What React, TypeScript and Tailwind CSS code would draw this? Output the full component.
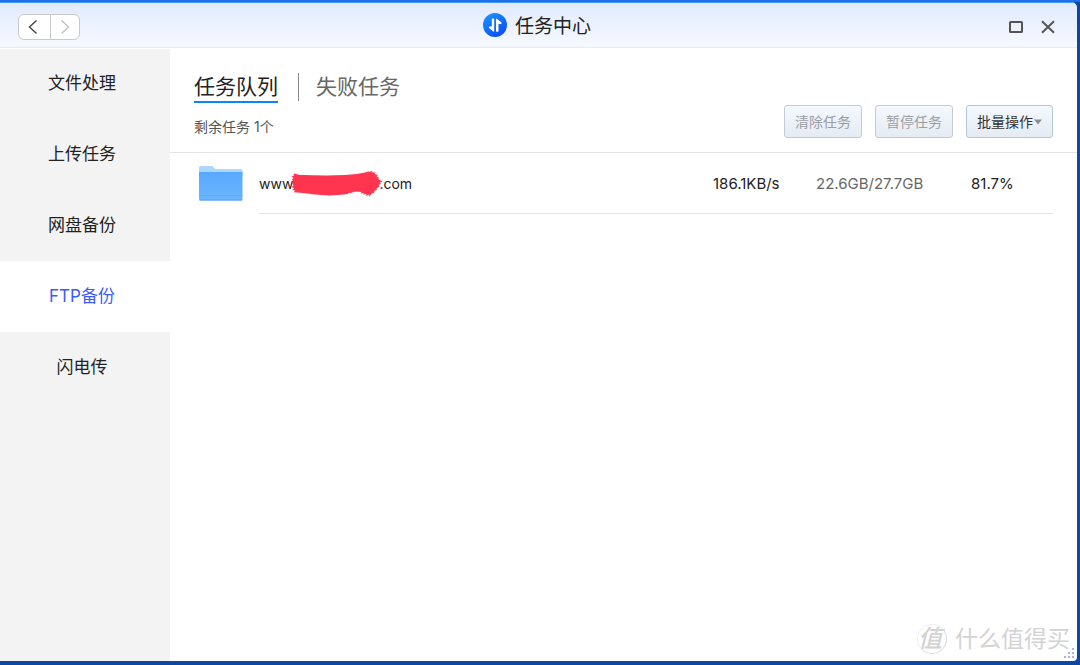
import React from "react";

type Task = {
  prefix: string;
  suffix: string;
  speed: string;
  size: string;
  percent: string;
};

const menu = ["文件处理", "上传任务", "网盘备份", "FTP备份", "闪电传"];
const activeMenu = "FTP备份";

const tasks: Task[] = [
  { prefix: "www", suffix: ".com", speed: "186.1KB/s", size: "22.6GB/27.7GB", percent: "81.7%" },
];

function Chevron({ dir }: { dir: "left" | "right" }) {
  return (
    <svg viewBox="0 0 10 16" className="h-4 w-2.5" fill="none" stroke="currentColor" strokeWidth="1.5" aria-hidden="true">
      <path d={dir === "left" ? "M8.5 1.5 1.5 8l7 6.5" : "M1.5 1.5 8.5 8l-7 6.5"} />
    </svg>
  );
}

function AppLogo() {
  return (
    <svg viewBox="0 0 24 24" className="size-6" aria-hidden="true">
      <defs>
        <linearGradient id="logo" x1="0" y1="0" x2="0.6" y2="1">
          <stop offset="0" stopColor="#1d97ff" />
          <stop offset="1" stopColor="#0a52f5" />
        </linearGradient>
      </defs>
      <circle cx="12" cy="12" r="12" fill="url(#logo)" />
      <path
        d="M8.8 6.3q0-.8.8-.8h.8q.8 0 .8.8v12q0 .5-.6.4L6.300 15.300q-.5-.5-.5-1 0-.9.8-.9h2.200zM13 6.200q0-.8.7-.5L18 9q.7.600.6 1.200 0 .8-.8.800h-2.300v6.900q0 .8-.8.800h-.9q-.8 0-.8-.8z"
        fill="#fff"
      />
    </svg>
  );
}

function Folder() {
  return (
    <svg viewBox="0 0 44 35" className="h-[35px] w-11" aria-hidden="true">
      <defs>
        <linearGradient id="folder" x1="0" y1="0" x2="0" y2="1">
          <stop offset="0" stopColor="#57a8fe" />
          <stop offset="1" stopColor="#6db6ff" />
        </linearGradient>
      </defs>
      <path d="M0 1.500Q0 0 1.500 0H12q1.200 0 2 .8l1.700 1.600q.8.700 2 .7H42q1.500 0 1.500 1.500V10H0z" fill="#abd6ff" />
      <path d="M0 6h43.500v27q0 1.500-1.500 1.500H1.500Q0 34.500 0 33z" fill="url(#folder)" />
      <path d="M0 29.500h43.500" stroke="#5fabf8" strokeWidth="0.700" />
      <path d="M.5 34h42.500" stroke="#57a0ec" strokeWidth="1" />
    </svg>
  );
}

function Scribble() {
  return (
    <svg viewBox="0 0 92 28" className="absolute -top-1 -left-0.5 h-7 w-[92px]" aria-hidden="true">
      <path
        d="M2.500 3.500 8 4.200 4.500 4.700 22 5.200 36 5.500 54 5 66 4 74 2.500 78 1.200 77.500 2.200 81.500.5 80.500 2.200 84.500 2.500 83.500 4 87 5 85.500 6.500 88.500 8 87 9 91.500 11.500 88.500 12.500 90 13.500 87.500 15.500 88.500 16.500 85.500 18.500 86 20 83.500 20.800 83 23 81 23.200 78 27 78.500 24.500 75 26 75.500 24 72 24.500 73 23 69.500 23.500 70.500 22 66 21.500 61 22 62 22.800 57 23 57.500 24 50 24.800 38 25.500 24 24.500 12 23 3 22.200 4 20.500 1 20 3 18.500.8 17 2.500 15.500 1 13 2 11 .8 9.500 2.500 8 .5 6.500 3 5.500z"
        fill="#ff344e"
      />
    </svg>
  );
}

const toolButton =
  "flex h-[33px] items-center rounded-[3px] border px-2.5 text-sm bg-linear-to-b from-[#f4f9fe] to-[#e5ebf4]";

export default function App() {
  return (
    <div className="flex min-h-screen flex-col border-t-2 border-t-[#1d6fe6] bg-[#0c47a1] pr-[3px] pb-1 font-['Inter','Noto_Sans_CJK_SC',sans-serif] text-[#222]">
      <div className="relative flex flex-1 flex-col overflow-hidden rounded-tr-[6px] rounded-br-[4px] bg-white">
        <header className="grid h-[46px] grid-cols-[1fr_auto_1fr] items-center border-t border-b border-t-[#4595ff] border-b-[#e9ebee] bg-linear-to-b from-[#e1eafd] to-[#f6f9ff] pr-[21px] pl-[18px]">
          <div className="mt-1 flex h-[26px] w-[62px] overflow-hidden rounded-[6px] border border-[#c9c9cb] bg-white">
            <button aria-label="后退" className="flex flex-1 items-center justify-center border-r border-[#c9c9cb] pr-0.5 text-[#4a4a4a]">
              <Chevron dir="left" />
            </button>
            <button aria-label="前进" className="flex flex-1 items-center justify-center text-[#c4c4c4]">
              <Chevron dir="right" />
            </button>
          </div>
          <h1 className="flex items-center gap-2 text-[19px] leading-6 text-[#222]">
            <AppLogo />
            <span className="pt-1">任务中心</span>
          </h1>
          <div className="mt-1 flex items-center justify-end gap-4 text-[#555]">
            <button aria-label="最大化">
              <svg viewBox="0 0 16 16" className="size-4" fill="none" stroke="currentColor" strokeWidth="2" aria-hidden="true">
                <rect x="2" y="3" width="12" height="10" rx="0.5" />
              </svg>
            </button>
            <button aria-label="关闭">
              <svg viewBox="0 0 16 16" className="size-4" fill="none" stroke="currentColor" strokeWidth="2" aria-hidden="true">
                <path d="M2 2.300 14 13.700M14 2.300 2 13.700" />
              </svg>
            </button>
          </div>
        </header>

        <div className="flex flex-1">
          <nav className="w-[170px] shrink-0 bg-[#f3f3f3] shadow-[inset_0_1px_0_#fff]">
            {menu.map((item) => (
              <a
                key={item}
                href="#"
                aria-current={item === activeMenu ? "page" : undefined}
                className={
                  "flex h-[71px] items-center justify-center pr-1.5 text-[17px] " +
                  (item === activeMenu ? "bg-white text-[#3b5bfd]" : "text-[#222]")
                }
              >
                {item}
              </a>
            ))}
          </nav>

          <main className="min-w-0 flex-1">
            <div className="flex h-[105px] items-end justify-between border-b border-[#e2e3e4] pr-6 pl-6">
              <div className="pb-[13px]">
                <div className="flex items-start text-[21px] leading-7">
                  <button className="border-b-2 border-[#0a84ff] text-[#222]">任务队列</button>
                  <span className="ml-5 h-7 w-px bg-[#8a8a8a]" />
                  <button className="ml-[17px] border-b-2 border-transparent text-[#666]">失败任务</button>
                </div>
                <p className="mt-3 text-sm leading-6 text-[#555]">剩余任务 1个</p>
              </div>
              <div className="flex gap-[13px] pb-3.5">
                <button className={toolButton + " border-[#c3cbd3] text-[#9b9ea2]"}>清除任务</button>
                <button className={toolButton + " border-[#c3cbd3] text-[#9b9ea2]"}>暂停任务</button>
                <button className={toolButton + " gap-px border-[#b4c6d9] text-[#333]"}>
                  批量操作
                  <svg viewBox="0 0 8 6" className="h-1.5 w-2" fill="#8b8f94" aria-hidden="true">
                    <path d="M0 .5h8L4 5.500z" />
                  </svg>
                </button>
              </div>
            </div>

            <ul className="pr-6 pl-[29px]">
              {tasks.map((task) => (
                <li key={task.prefix} className="flex h-[61px] text-sm">
                  <div className="flex w-[60px] shrink-0 items-center">
                    <Folder />
                  </div>
                  <div className="flex flex-1 items-center border-b border-[#e2e3e4] pt-0.5">
                    <div className="flex flex-1 items-center">
                      {task.prefix}
                      <span className="relative h-5 w-[86px]">
                        <Scribble />
                      </span>
                      {task.suffix}
                    </div>
                    <span className="w-[103px] text-[15px]">{task.speed}</span>
                    <span className="w-[155px] text-[15px] text-[#666]">{task.size}</span>
                    <span className="w-[82px] text-[15px]">{task.percent}</span>
                  </div>
                </li>
              ))}
            </ul>
          </main>
        </div>

        <div className="absolute right-[7px] bottom-1.5 flex items-center gap-2 text-[#d3d3d3]">
          <span className="flex size-[30px] items-center justify-center rounded-full border border-[#dcdcdc] border-t-[#f0f0f0] border-l-[#f0f0f0] pr-1 text-2xl leading-none font-medium italic">
            值
          </span>
          <span className="text-[23px] leading-8">什么值得买</span>
        </div>
        <svg viewBox="0 0 10 10" className="absolute right-[3px] bottom-[3px] size-2.5" fill="#a9b3ee" aria-hidden="true">
          <path d="M8 0h2v2H8zM4 4h2v2H4zM8 4h2v2H8zM0 8h2v2H0zM4 8h2v2H4zM8 8h2v2H8z" />
        </svg>
      </div>
    </div>
  );
}
